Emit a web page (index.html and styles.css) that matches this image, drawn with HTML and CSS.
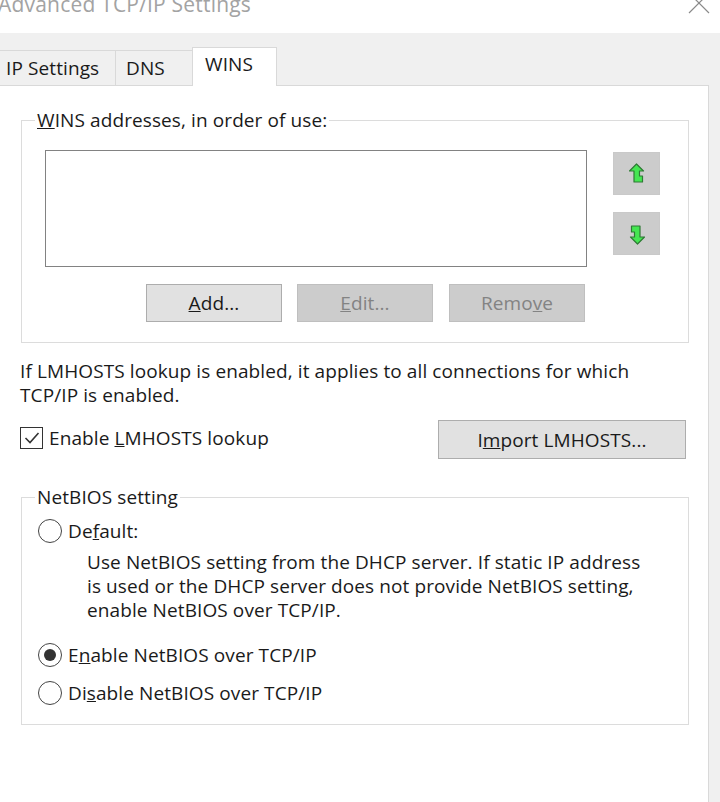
FILE: index.html
```html
<!DOCTYPE html>
<html lang="en">
<head>
<meta charset="utf-8">
<title>Advanced TCP/IP Settings</title>
<link rel="stylesheet" href="styles.css">
</head>
<body>
<div class="window">
  <div class="titlebar">
    <span class="title">Advanced TCP/IP Settings</span>
    <svg class="close" width="24" height="24" viewBox="0 0 24 24" aria-label="Close">
      <path d="M2 2 L22 22 M22 2 L2 22" stroke="#8a8a8a" stroke-width="1.2" fill="none"/>
    </svg>
  </div>

  <div class="tabstrip">
    <div class="tab tab-ip">IP Settings</div>
    <div class="tab tab-dns">DNS</div>
    <div class="tab tab-wins is-active">WINS</div>
  </div>

  <div class="panel">
    <fieldset class="group group-wins">
      <legend class="group-title"><u>W</u>INS addresses, in order of use:</legend>
      <div class="wins-body">
        <div class="list-row">
          <div class="listbox"></div>
          <div class="order-buttons">
            <button class="order-btn" aria-label="Move up">
              <svg width="16" height="22" viewBox="0 0 16 22">
                <path d="M7.5 1 L14.5 8 L10.5 8 L10.5 13 L13.5 13 L13.5 19 L5 19 L5 8 L0.5 8 Z" fill="#45e652" stroke="#2f7a35" stroke-width="1.2" stroke-linejoin="round"/>
              </svg>
            </button>
            <button class="order-btn" aria-label="Move down">
              <svg width="16" height="22" viewBox="0 0 16 22">
                <path d="M8.5 21 L1.5 14 L5.5 14 L5.5 9 L2.5 9 L2.5 3 L11 3 L11 14 L15.5 14 Z" fill="#45e652" stroke="#2f7a35" stroke-width="1.2" stroke-linejoin="round"/>
              </svg>
            </button>
          </div>
        </div>
        <div class="button-row">
          <button class="btn btn-small"><u>A</u>dd...</button>
          <button class="btn btn-small is-disabled"><u>E</u>dit...</button>
          <button class="btn btn-small is-disabled btn-remove">Remo<u>v</u>e</button>
        </div>
      </div>
    </fieldset>

    <p class="note">If LMHOSTS lookup is enabled, it applies to all connections for which<br>TCP/IP is enabled.</p>

    <div class="lmhosts-row">
      <label class="check">
        <span class="checkbox">
          <svg width="16" height="14" viewBox="0 0 16 14">
            <path d="M1.5 7 L6 11.5 L14.5 2" stroke="#333" stroke-width="1.6" fill="none"/>
          </svg>
        </span>
        <span>Enable <u>L</u>MHOSTS lookup</span>
      </label>
      <button class="btn btn-import">I<u>m</u>port LMHOSTS...</button>
    </div>

    <fieldset class="group group-netbios">
      <legend class="group-title">NetBIOS setting</legend>
      <div class="netbios-body">
        <label class="radio-row">
          <span class="radio"></span>
          <span>De<u>f</u>ault:</span>
        </label>
        <p class="radio-desc">Use NetBIOS setting from the DHCP server. If static IP address<br>is used or the DHCP server does not provide NetBIOS setting,<br>enable NetBIOS over TCP/IP.</p>
        <label class="radio-row radio-enable">
          <span class="radio is-checked"></span>
          <span>E<u>n</u>able NetBIOS over TCP/IP</span>
        </label>
        <label class="radio-row radio-disable">
          <span class="radio"></span>
          <span>Di<u>s</u>able NetBIOS over TCP/IP</span>
        </label>
      </div>
    </fieldset>
  </div>
</div>
</body>
</html>
```

FILE: styles.css
```css
* {
  box-sizing: border-box;
}

html,
body {
  margin: 0;
  padding: 0;
}

body {
  width: 720px;
  height: 802px;
  overflow: hidden;
  background: #f0f0f0;
  font-family: "Open Sans", "Noto Sans", sans-serif;
  font-size: 19px;
  letter-spacing: 0.1px;
  color: #1a1a1a;
}

.window {
  display: flex;
  flex-direction: column;
  height: 802px;
}

/* Title bar */
.titlebar {
  height: 33px;
  flex: none;
  background: #ffffff;
  display: flex;
  justify-content: space-between;
  align-items: flex-start;
  overflow: hidden;
}

.title {
  font-size: 21px;
  line-height: 22px;
  margin-top: -7px;
  margin-left: -2px;
  color: #a3a3a3;
  letter-spacing: 0.2px;
}

.close {
  margin-top: -9px;
  margin-right: 9px;
}

/* Tabs */
.tabstrip {
  height: 52px;
  flex: none;
  display: flex;
  align-items: flex-end;
  background: #f0f0f0;
  position: relative;
  z-index: 1;
}

.tab {
  height: 35px;
  border: 1px solid #d9d9d9;
  border-bottom: none;
  background: #f0f0f0;
  line-height: 34px;
  white-space: nowrap;
}

.tab-ip {
  width: 117px;
  margin-left: -1px;
  padding-left: 6px;
}

.tab-dns {
  width: 78px;
  margin-left: -1px;
  padding-left: 10px;
}

.tab-wins {
  width: 85px;
  margin-left: -1px;
  padding-left: 12px;
}

.tab.is-active {
  height: 39px;
  margin-bottom: -1px;
  background: #ffffff;
  line-height: 32px;
}

/* Tab page */
.panel {
  flex: 1;
  width: 709px;
  background: #ffffff;
  border-top: 1px solid #d9d9d9;
  border-right: 1px solid #d9d9d9;
  display: flex;
  flex-direction: column;
  align-items: flex-start;
}

.group {
  width: 668px;
  margin: 0 0 0 21px;
  padding: 0;
  border: 1px solid #dcdcdc;
  min-width: 0;
}

.group-title {
  margin-left: 13px;
  padding: 0 2px;
  line-height: 22px;
}

.group-wins {
  margin-top: 23px;
}

.wins-body {
  padding: 19px 27px 20px 23px;
}

.list-row {
  display: flex;
  gap: 26px;
}

.listbox {
  width: 542px;
  height: 117px;
  border: 1px solid #828282;
  background: #ffffff;
}

.order-buttons {
  display: flex;
  flex-direction: column;
  gap: 17px;
  padding-top: 2px;
}

.order-btn {
  width: 47px;
  height: 43px;
  padding: 0;
  border: 1px solid #c9c9c9;
  background: #cccccc;
  display: flex;
  align-items: center;
  justify-content: center;
}

.button-row {
  width: 540px;
  margin-top: 17px;
  display: flex;
  justify-content: flex-end;
  gap: 15px;
}

.btn {
  font-family: inherit;
  font-size: 19px;
  letter-spacing: 0.1px;
  color: #1a1a1a;
  background: #e1e1e1;
  border: 1px solid #adadad;
  padding: 0;
}

.btn-small {
  width: 136px;
  height: 38px;
}

.btn-remove {
  margin-left: 1px;
}

.btn.is-disabled {
  background: #cccccc;
  border-color: #bfbfbf;
  color: #838383;
}

.note {
  margin: 16px 0 0 20px;
  line-height: 24px;
}

.lmhosts-row {
  width: 666px;
  margin: 13px 0 0 20px;
  display: flex;
  justify-content: space-between;
  align-items: center;
}

.check {
  display: flex;
  align-items: center;
  gap: 6px;
  margin-top: -3px;
}

.checkbox {
  width: 23px;
  height: 22px;
  border: 1px solid #333333;
  display: flex;
  align-items: center;
  justify-content: center;
}

.btn-import {
  width: 248px;
  height: 39px;
}

/* NetBIOS group */
.group-netbios {
  margin-top: 27px;
}

.netbios-body {
  padding: 11px 0 19px 16px;
}

.radio-row {
  display: flex;
  align-items: center;
  gap: 6px;
  height: 24px;
}

.radio {
  width: 24px;
  height: 24px;
  border: 1.2px solid #444444;
  border-radius: 50%;
  display: flex;
  align-items: center;
  justify-content: center;
}

.radio.is-checked::after {
  content: "";
  width: 12px;
  height: 12px;
  border-radius: 50%;
  background: #333333;
}

.radio-desc {
  margin: 7px 0 0 49px;
  line-height: 24px;
}

.radio-enable {
  margin-top: 21px;
}

.radio-disable {
  margin-top: 14px;
}
```
